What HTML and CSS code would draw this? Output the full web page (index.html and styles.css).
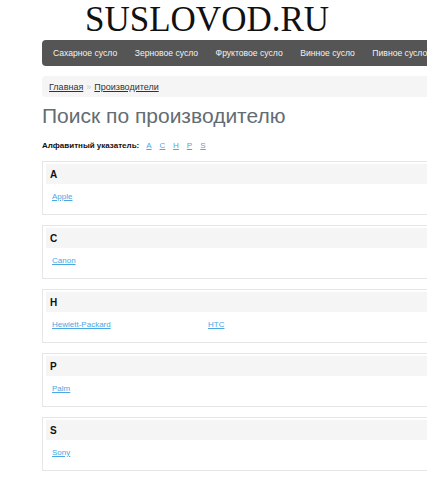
FILE: index.html
```html
<!DOCTYPE html>
<html>
<head>
<meta charset="utf-8">
<link rel="stylesheet" href="styles.css">
</head>
<body>
<div class="page">
  <div class="logo">SUSLOVOD.RU</div>
  <nav class="nav">
    <a>Сахарное сусло</a>
    <a>Зерновое сусло</a>
    <a>Фруктовое сусло</a>
    <a>Винное сусло</a>
    <a>Пивное сусло</a>
  </nav>
  <div class="crumbs"><a>Главная</a><span class="sep">»</span><a>Производители</a></div>
  <h1 class="title">Поиск по производителю</h1>
  <div class="alpha"><b>Алфавитный указатель:</b><a>A</a><a>C</a><a>H</a><a>P</a><a>S</a></div>
  <div class="card"><div class="head">A</div><div class="body"><a>Apple</a></div></div>
  <div class="card"><div class="head">C</div><div class="body"><a>Canon</a></div></div>
  <div class="card"><div class="head">H</div><div class="body"><a>Hewlett-Packard</a><a>HTC</a></div></div>
  <div class="card"><div class="head">P</div><div class="body"><a>Palm</a></div></div>
  <div class="card"><div class="head">S</div><div class="body"><a>Sony</a></div></div>
</div>
</body>
</html>
```
FILE: styles.css
```css
html, body { margin: 0; padding: 0; overflow: hidden; background: #fff; }
body { font-family: "Liberation Sans", Arial, sans-serif; }
.page { width: 700px; margin-left: 42px; }
.logo { font-family: "Liberation Serif", "Times New Roman", serif; font-size: 35px; line-height: 40px; color: #111; margin-left: 43px; height: 40px; }
.nav { display: flex; height: 26px; align-items: center; background: #555; border-radius: 4px; padding-left: 11px; gap: 17.5px; }
.nav a { color: #f2f2f2; font-size: 8.6px; white-space: nowrap; }
.crumbs { margin-top: 10px; height: 21px; background: #f5f5f5; border-radius: 4px; display: flex; align-items: center; padding-left: 7px; font-size: 9px; }
.crumbs a { color: #333; text-decoration: underline; }
.crumbs .sep { color: #ccc; margin: 0 3px; }
.title { font-weight: normal; font-size: 21px; color: #646c73; margin: 6px 0 0 0; line-height: 25px; }
.alpha { margin-top: 12px; font-size: 8px; display: flex; align-items: center; height: 10px; }
.alpha b { color: #111; margin-right: 3px; }
.alpha a { color: #4aa8e3; text-decoration: underline; width: 13.5px; text-align: center; }
.card { margin-top: 10px; border: 1px solid #e6e6e6; padding: 2px 3px; height: 48px; box-sizing: content-box; }
.alpha + .card { margin-top: 11px; }
.head { background: #f5f5f5; height: 20px; display: flex; align-items: center; padding-left: 4px; font-size: 10px; font-weight: bold; color: #111; }
.body { display: flex; padding: 8px 6px 0; font-size: 8px; }
.body a { color: #4aa8e3; text-decoration: underline; width: 156px; }
```
